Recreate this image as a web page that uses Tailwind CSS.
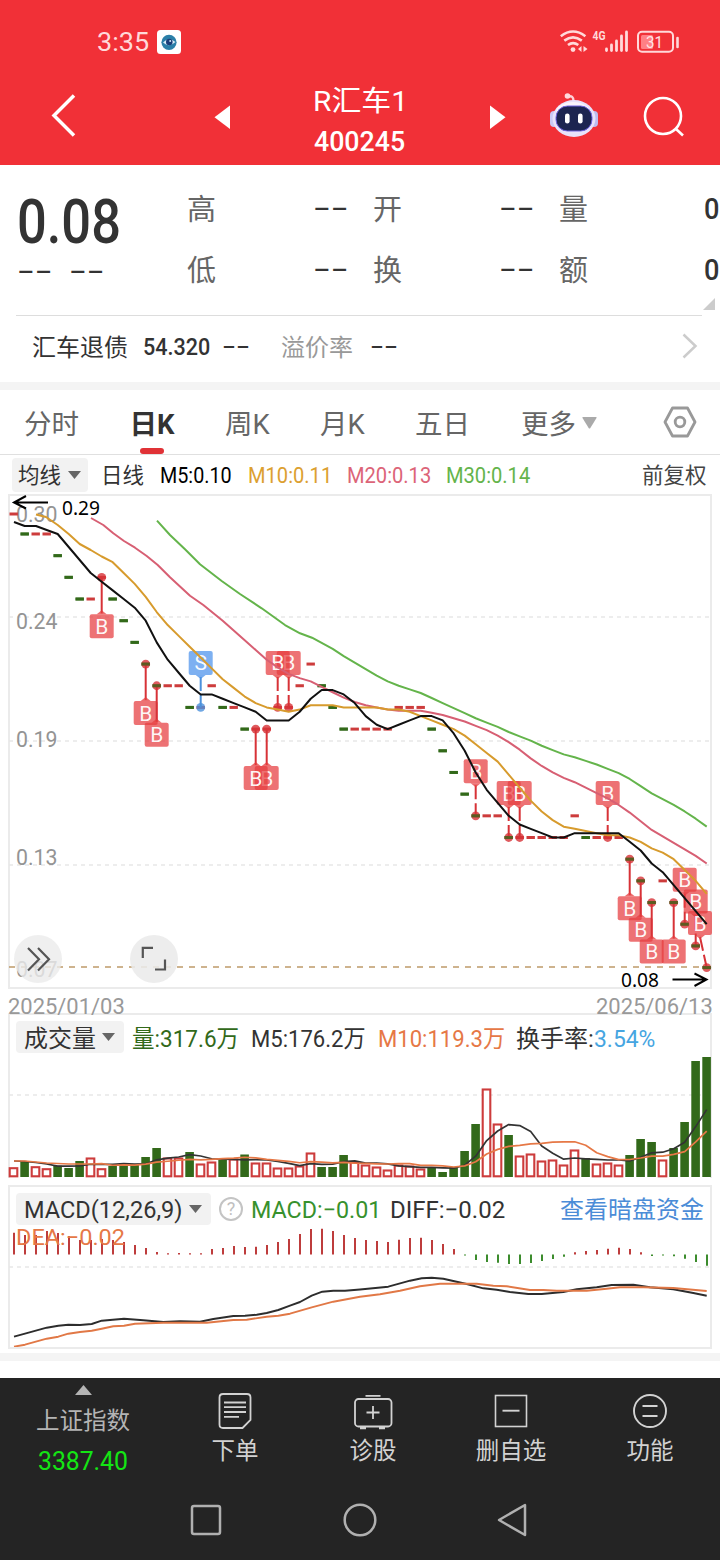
<!DOCTYPE html>
<html lang="zh-CN">
<head>
    <meta charset="UTF-8">
    <meta name="viewport" content="width=device-width, initial-scale=1.0">
    <title>R汇车1 400245</title>
    <script src="https://cdn.jsdelivr.net/npm/@tailwindcss/browser@4"></script>
</head>
<body class="bg-white">
<div class="w-[720px] h-[1560px] overflow-hidden bg-white font-['Roboto','Noto_Sans_CJK_SC',sans-serif] leading-none text-[#333] whitespace-nowrap">

    <!-- Header -->
    <header class="h-[165px] bg-[#f13037] text-white">
        <div class="flex items-center h-[84px] pl-[97px]">
            <span class="text-[26px] text-[#ffd9da]" data-fit="52">3:35</span>
            <svg class="ml-2 w-6 h-6" viewBox="0 0 24 24">
                <rect width="24" height="24" rx="3.5" fill="#fff"/>
                <circle cx="12" cy="12.3" r="7.6" fill="#2b7fa8"/>
                <path d="M6 12.5Q12 6.500 18.500 12Q12 18 6 12.500Z" fill="#d8ecf8"/>
                <circle cx="12.300" cy="12" r="3.300" fill="#1b3e78"/>
                <circle cx="13.200" cy="11" r="1" fill="#cfe6f5"/>
            </svg>
            <svg class="ml-[379px] w-[120px] h-6" viewBox="560 30 120 24" fill="none">
                <g stroke="#ffd9da" stroke-width="2.600">
                    <path d="M560.800 36.200Q573 26.800 585.400 36.200"/>
                    <path d="M564.300 40.600Q573 34 581.800 40.600"/>
                    <path d="M568 45Q573 41.200 578.300 45"/>
                </g>
                <circle cx="573" cy="49.600" r="2.400" fill="#ffd9da"/>
                <path d="M581.500 46v6l-3.500-3zM583.500 46v6l4-3z" fill="#ffd9da"/>
                <text x="592.500" y="39.500" font-size="12" font-weight="700" fill="#ffd9da" textLength="13" lengthAdjust="spacingAndGlyphs">4G</text>
                <g stroke="#ffd9da" stroke-width="2.800" stroke-linecap="round">
                    <path d="M606.500 49v1.500M611.500 45v5.500M616.500 41v9.500M621.500 36v14.500M626.500 32v18.500"/>
                </g>
                <rect x="638" y="31.800" width="35" height="20" rx="4" stroke="#ffd9da" stroke-width="2"/>
                <rect x="641" y="35" width="12" height="14" rx="1.500" fill="#ff8085"/>
                <text x="646" y="47.500" font-size="16" fill="#ffe2e3" textLength="17" lengthAdjust="spacingAndGlyphs">31</text>
                <path d="M677.500 38v9" stroke="#ffd9da" stroke-width="2.600" stroke-linecap="round"/>
            </svg>
        </div>
        <div class="flex items-start h-[81px] pl-[50px]">
            <svg class="mt-[10px] w-[26px] h-11" viewBox="0 0 26 44" fill="none" stroke="#fff" stroke-width="3.500"><path d="M24 1.500L4 21.500L24 41.500"/></svg>
            <svg class="mt-[21px] ml-[138px] w-4 h-6" viewBox="0 0 16 24"><path d="M16 0.500V24L0.500 12.300Z" fill="#fff"/></svg>
            <div class="ml-[70px] w-[120px] flex flex-col items-center font-medium">
                <div class="h-[34px] pt-px flex items-center"><span class="text-[28px] font-normal" data-fit="95">R汇车1</span></div>
                <div class="h-[48px] flex items-center"><span class="text-[27px]" data-fit="91">400245</span></div>
            </div>
            <svg class="mt-[21px] ml-[70px] w-4 h-6" viewBox="0 0 16 24"><path d="M0 0.500V24L15.500 12.300Z" fill="#fff"/></svg>
            <!-- assistant robot -->
            <svg class="mt-[8px] ml-[42px] w-[50px] h-[46px]" viewBox="548 92 50 46" fill="none">
                <path d="M568 96.500Q573.500 95 573.500 101" stroke="#ffd0d6" stroke-width="2.400"/>
                <circle cx="567.500" cy="96" r="2.800" fill="#ffd9dc"/>
                <rect x="550" y="111" width="8" height="16" rx="4" fill="#c9c8f5"/>
                <rect x="590" y="111" width="8" height="16" rx="4" fill="#bdbcf0"/>
                <ellipse cx="574" cy="118.500" rx="21.500" ry="18.500" fill="#e8e2fb"/>
                <ellipse cx="573" cy="112" rx="17" ry="10" fill="#fbf4fb"/>
                <rect x="556" y="106" width="36" height="25" rx="11.500" fill="#1d2550" stroke="#7064e0" stroke-width="1"/>
                <rect x="565" y="113.500" width="4.600" height="10" rx="2.300" fill="#fff"/>
                <rect x="578" y="113.500" width="4.600" height="10" rx="2.300" fill="#fff"/>
            </svg>
            <svg class="mt-[11px] ml-[44px] w-[44px] h-[44px]" viewBox="642 95 44 44" fill="none" stroke="#fff" stroke-width="2.600"><circle cx="663" cy="116" r="18"/><path d="M675.500 128.500L683 135.500"/></svg>
        </div>
    </header>

    <!-- Quote -->
    <section class="h-[150px] flex">
        <div class="w-[187px] pl-[17px]">
            <div class="mt-[26px] h-[62px] flex items-center font-medium text-[61px]"><span data-fit="104">0.08</span></div>
            <div class="h-[33px] flex items-center gap-[16px] text-[28px] font-['Liberation_Sans']"><span data-fit="36">--</span><span data-fit="36">--</span></div>
        </div>
        <div class="w-[186px] pt-[15px] text-[29px] text-[#666]">
            <div class="h-[61px] pr-[24px] flex items-center justify-between">高<span class="text-[#333] text-[28px] font-['Liberation_Sans'] relative -top-[4px]" data-fit="36">--</span></div>
            <div class="h-[61px] pr-[24px] flex items-center justify-between">低<span class="text-[#333] text-[28px] font-['Liberation_Sans'] relative -top-[4px]" data-fit="36">--</span></div>
        </div>
        <div class="w-[186px] pt-[15px] text-[29px] text-[#666]">
            <div class="h-[61px] pr-[24px] flex items-center justify-between">开<span class="text-[#333] text-[28px] font-['Liberation_Sans'] relative -top-[4px]" data-fit="36">--</span></div>
            <div class="h-[61px] pr-[24px] flex items-center justify-between">换<span class="text-[#333] text-[28px] font-['Liberation_Sans'] relative -top-[4px]" data-fit="36">--</span></div>
        </div>
        <div class="w-[161px] pt-[15px] text-[29px] text-[#666]">
            <div class="h-[61px] pr-[1px] flex items-center justify-between">量<span class="text-[#333] font-medium relative -top-px" data-fit="15">0</span></div>
            <div class="h-[61px] pr-[1px] flex items-center justify-between">额<span class="text-[#333] font-medium relative -top-px" data-fit="15">0</span></div>
            <svg class="-mt-[4px] ml-[144px] w-3 h-3" viewBox="0 0 12 12"><path d="M12 0V12H0Z" fill="#ccc"/></svg>
        </div>
    </section>
    <div class="ml-4 w-[686px] h-px bg-[#ddd]"></div>
    <section class="h-[66px] pb-[3px] pl-[32px] flex items-center text-[24px]">
        <span class="w-[111px]">汇车退债</span>
        <span class="w-[79px]"><span class="text-[23.5px] font-medium" data-fit="67">54.320</span></span>
        <span class="w-[59px] relative -top-[3px]"><span class="font-['Liberation_Sans']" data-fit="28">--</span></span>
        <span class="w-[89px] text-[#999]">溢价率</span>
        <span class="w-[312px] relative -top-[3px]"><span class="font-['Liberation_Sans']" data-fit="28">--</span></span>
        <svg class="-mt-[3px] w-[16px] h-[26px]" viewBox="0 0 16 26" fill="none" stroke="#ccc" stroke-width="2.500"><path d="M1.500 1.500L13.500 13L1.500 24.500"/></svg>
    </section>
    <div class="h-2 bg-[#f4f4f4]"></div>

    <!-- Period tabs -->
    <nav class="h-[65px] border-b border-[#e0e0e0] flex text-[27.5px] text-[#666] pl-[24px]">
        <div class="w-[83px] h-[66px] pt-[3px] flex items-center">分时</div>
        <div class="w-[90px] flex flex-col items-center font-bold text-[#333]">
            <div class="h-[66px] pt-[3px] -mb-[8px] flex items-center">日K</div>
            <div class="w-6 h-[6px] rounded-full bg-[#e03236]"></div>
        </div>
        <div class="w-[95px] h-[66px] pt-[3px] pl-[28px] flex items-center">周K</div>
        <div class="w-[95px] h-[66px] pt-[3px] pl-[28px] flex items-center">月K</div>
        <div class="w-[134px] h-[66px] pt-[3px] pl-[28px] flex items-center">五日</div>
        <div class="w-[142px] h-[66px] pt-[3px] flex items-center gap-[6px]">更多
            <svg class="-mt-1 w-[15px] h-3" viewBox="0 0 15 12"><path d="M1 0H14Q15 0 14.500 1L8.200 11.200Q7.500 12 6.800 11.200L0.500 1Q0 0 1 0Z" fill="#aaa"/></svg>
        </div>
        <svg class="mt-[15px] w-[34px] h-[34px]" viewBox="663 405 34 34" fill="none" stroke="#999" stroke-width="2.800" stroke-linejoin="round"><path d="M672.500 408H687.500L695 422L687.500 436H672.500L665 422Z"/><circle cx="680" cy="422" r="4.800"/></svg>
    </nav>

    <!-- Moving average legend -->
    <div class="h-[39px] pt-[2px] pl-3 flex items-center text-[21.5px]">
        <div class="-mt-[2px] pt-[2px] w-[76px] h-[34px] bg-[#f2f2f2] rounded pl-[6px] flex items-center gap-[7px]">均线<svg class="-mt-[2px] w-[13px] h-2" viewBox="0 0 13 8"><path d="M0 0H13L6.500 8Z" fill="#666"/></svg></div>
        <span class="w-[72px] pl-[13px]">日线</span>
        <span class="w-[88px] text-black text-[22.5px]"><span data-fit="72">M5:0.10</span></span>
        <span class="w-[99px] text-[#dca030] text-[22.5px]"><span data-fit="84">M10:0.11</span></span>
        <span class="w-[99px] text-[#dc6478] text-[22.5px]"><span data-fit="84">M20:0.13</span></span>
        <span class="w-[196px] text-[#64b44b] text-[22.5px]"><span data-fit="84">M30:0.14</span></span>
        <span class="text-[#444]">前复权</span>
    </div>

    <svg id="kline" class="block w-[720px] h-[495px]" viewBox="0 494 720 495" fill="none"></svg>

    <div class="h-[24px] pl-[8px] pr-[7px] flex items-center justify-between text-[22.5px] text-[#999] pt-[10px]">
        <span data-fit="117">2025/01/03</span>
        <span data-fit="117">2025/06/13</span>
    </div>

    <!-- Volume -->
    <section class="ml-[8px] w-[704px] h-[165px] border-2 border-b-0 border-[#ebebeb]">
        <div class="mt-[6px] pt-[3px] pl-[6px] h-8 flex items-center text-[24px]">
            <div class="-mt-[3px] pt-[3px] w-[108px] h-8 bg-[#f2f2f2] rounded pl-[8px] flex items-center gap-[6px]">成交量<svg class="-mt-1 w-[13px] h-2" viewBox="0 0 13 8"><path d="M0 0H13L6.500 8Z" fill="#666"/></svg></div>
            <span class="ml-[8px] w-[119px] text-[#32691a]"><span data-fit="107">量:317.6万</span></span>
            <span class="w-[127px]"><span data-fit="115">M5:176.2万</span></span>
            <span class="w-[138px] text-[#e67846]"><span data-fit="127">M10:119.3万</span></span>
            <span class="w-[78px]">换手率:</span>
            <span class="text-[#46a5e1]"><span data-fit="61">3.54%</span></span>
        </div>
        <svg id="volume" class="block -ml-[10px] w-[720px] h-[125px] relative" viewBox="0 1053 720 125" fill="none"></svg>
    </section>

    <!-- MACD -->
    <section class="mt-[7px] ml-[8px] w-[704px] h-[164px] border-2 border-[#ebebeb]">
        <div class="mt-[6px] mb-px pt-[2px] pl-[6px] h-8 flex items-center text-[24px]">
            <div class="-mt-[2px] pt-[2px] w-[195px] h-8 bg-[#f2f2f2] rounded pl-[8px] flex items-center gap-[6px]"><span data-fit="159">MACD(12,26,9)</span><svg class="-mt-[3px] w-[13px] h-2" viewBox="0 0 13 8"><path d="M0 0H13L6.500 8Z" fill="#666"/></svg></div>
            <div class="-mt-[2px] ml-[8px] w-6 h-6 rounded-full border-2 border-[#c4c4c4] text-[#c0c0c0] text-[18px] flex items-center justify-center">?</div>
            <span class="ml-[8px] w-[139px] text-[#37912d]"><span data-fit="130">MACD:−0.01</span></span>
            <span class="w-[170px]"><span data-fit="115">DIFF:−0.02</span></span>
            <span class="text-[#4b8cd7]">查看暗盘资金</span>
        </div>
        <svg id="macd" class="block -ml-[10px] w-[720px] h-[121px] relative" viewBox="0 1226 720 121" fill="none"></svg>
    </section>
    <div class="mt-[4px] h-2 bg-[#f4f4f4]"></div>

    <!-- Bottom bar -->
    <footer class="mt-[17px] h-[182px] bg-[#242424] text-[#d2d2d2] text-[23.5px]">
        <div class="h-[102px] flex">
            <div class="w-[166px] flex flex-col items-center text-[#b4b4b4]">
                <svg class="mt-[7px] w-[17px] h-[10px]" viewBox="0 0 17 10"><path d="M8.500 0L17 10H0Z" fill="#b4b4b4"/></svg>
                <div class="h-[52px] pt-[2px] flex items-center">上证指数</div>
                <div class="h-[29px] flex items-center text-[25px] text-[#14e614]"><span data-fit="90">3387.40</span></div>
            </div>
            <div class="w-[138px] flex flex-col items-center">
                <svg class="mt-[13px] w-10 h-10" viewBox="215 1391 40 40" fill="none" stroke="#d2d2d2" stroke-width="1.800"><path d="M223 1394H247Q250.500 1394 250.500 1397.500V1420L242.500 1428H223Q219.500 1428 219.500 1424.500V1397.500Q219.500 1394 223 1394ZM224 1402.500H246M224 1407.200H246M224 1412H246M224 1416.800H239"/></svg>
                <div class="h-[41px] pt-px flex items-center">下单</div>
            </div>
            <div class="w-[138px] flex flex-col items-center">
                <svg class="mt-[13px] w-10 h-10" viewBox="353 1391 40 40" fill="none" stroke="#d2d2d2" stroke-width="1.800"><rect x="355" y="1399" width="36.500" height="27.500" rx="3.500"/><path d="M365.500 1395.800H380.500M373 1406V1419M366.500 1412.500H379.500"/><path d="M360 1428H366M379 1428H385" stroke-width="2.400"/></svg>
                <div class="h-[41px] pt-px flex items-center">诊股</div>
            </div>
            <div class="w-[138px] flex flex-col items-center">
                <svg class="mt-[13px] w-10 h-10" viewBox="491 1391 40 40" fill="none" stroke="#d2d2d2" stroke-width="1.600"><rect x="495.500" y="1395.500" width="31" height="31"/><path d="M502.500 1410.700H519.500" stroke-width="1.900"/></svg>
                <div class="h-[41px] pt-px flex items-center">删自选</div>
            </div>
            <div class="w-[140px] flex flex-col items-center">
                <svg class="mt-[13px] w-10 h-10" viewBox="630 1391 40 40" fill="none" stroke="#d2d2d2" stroke-width="1.900"><circle cx="650" cy="1411" r="16"/><path d="M642.500 1406H657.500M642.500 1416H657.500"/></svg>
                <div class="h-[41px] pt-px flex items-center">功能</div>
            </div>
        </div>
        <div class="h-20 flex justify-center items-start pt-[20px] gap-[112px]">
            <svg class="w-10 h-10" viewBox="0 0 40 40" fill="none" stroke="#b0b0b0" stroke-width="2.500"><rect x="4" y="6" width="28" height="28" rx="2"/></svg>
            <svg class="w-10 h-10" viewBox="0 0 40 40" fill="none" stroke="#b0b0b0" stroke-width="2.500"><circle cx="20" cy="20" r="15.300"/></svg>
            <svg class="w-10 h-10" viewBox="0 0 40 40" fill="none" stroke="#b0b0b0" stroke-width="2.500" stroke-linejoin="round"><path d="M33 5V35L7 20Z"/></svg>
        </div>
    </footer>
</div>

<script>
    const RED = '#cd3c3c', GREEN = '#32691a', GRID = '#e8e8e8';
    const X = i => 13.7 + i * 11;

    // [colour, price level] for each trading day; one level is 0.01
    const DAYS = 'r0 g1 r1 r1 g2 g3 g4 r4 r3 g4 g5 g6 g7 g8 r8 r8 g9 r9 r8 g9 r9 g10 r10 r10 r9 r9 r8 r7 g8 g9 g10 r10 r10 r10 r10 r9 r9 r9 g10 g11 g12 g13 g14 r14 r14 g15 r15 r15 r15 r15 r15 r14 g15 r15 r15 r15 g16 g17 g18 r17 g18 g19 g20 g21'
        .split(' ').map(d => [d[0], Number(d.slice(1))]);
    const Y = n => n === 0 ? 514 : 512.3 + n * 21.68;

    function line(points, color, width = 2) {
        return `<polyline points="${points.map(p => p.join(',')).join(' ')}" stroke="${color}" stroke-width="${width}" stroke-linejoin="round"/>`;
    }

    function average(values, n) {
        const out = [];
        for (let i = n - 1; i < values.length; i++) {
            const sum = values.slice(i - n + 1, i + 1).reduce((a, b) => a + b, 0);
            out.push([X(i), sum / n]);
        }
        return out;
    }

    function label(x, y, text, width, size, color, extra = '') {
        return `<text x="${x}" y="${y}" font-size="${size}" fill="${color}" textLength="${width}" lengthAdjust="spacingAndGlyphs" ${extra}>${text}</text>`;
    }

    function axis(y, text) {
        return label(16, y, text, 41.5, 22.5, '#949494');
    }

    function dashed(y) {
        return `<path d="M9 ${y}H711" stroke="${GRID}" stroke-width="1.6" stroke-dasharray="4 4"/>`;
    }

    // trade marker: dot on the candle, stem and lettered box
    function marker(i, side, letter = 'B') {
        const x = X(i), y = Y(DAYS[i][1]);
        const bx = Math.min(x, 700), by = side === 'up' ? y - 44.5 : y + 49;
        const fill = letter === 'S' ? '#4b91eb' : '#e63c3e';
        const stem = letter === 'S' ? '#4b91dc' : '#d73237';
        let s = `<circle cx="${x}" cy="${y}" r="4.4" fill="${stem}" fill-opacity=".8"/>`;
        if (side === 'up') {
            s += `<path d="M${bx} ${by + 14}L${x} ${y}" stroke="${stem}" stroke-width="2" stroke-dasharray="14 4 20"/>`;
            s += `<path d="M${bx - 5} ${by + 12}L${bx} ${by + 16}L${bx + 5} ${by + 12}Z" fill="${fill}" fill-opacity=".75"/>`;
        } else {
            s += `<path d="M${x} ${y}V${by - 13}" stroke="${stem}" stroke-width="2"/>`;
            s += `<path d="M${bx - 5} ${by - 12}L${bx} ${by - 16}L${bx + 5} ${by - 12}Z" fill="${fill}" fill-opacity=".75"/>`;
        }
        s += `<rect x="${bx - 12}" y="${by - 12}" width="24" height="24" rx="2" fill="${fill}" fill-opacity=".72"/>`;
        s += `<text x="${bx}" y="${by + 7.5}" font-size="21" text-anchor="middle" fill="#fff" fill-opacity=".95">${letter}</text>`;
        return s;
    }

    function drawKline() {
        let s = '<rect x="9" y="495" width="702" height="493" stroke="#ebebeb" stroke-width="2"/>';
        s += dashed(617) + dashed(741) + dashed(865);
        s += '<path d="M9 967H706" stroke="#be9b69" stroke-width="1.7" stroke-dasharray="6 6"/>';
        s += axis(521.5, '0.30') + axis(629, '0.24') + axis(747, '0.19') + axis(865, '0.13') + axis(977, '0.07');

        DAYS.forEach(([c, n], i) => {
            s += `<rect x="${X(i) - 4.2}" y="${Y(n) - 1.5}" width="8.4" height="3" fill="${c === 'r' ? RED : GREEN}"/>`;
        });
        [8, 12, 13, 23, 22, 56, 57, 58, 60].forEach(i => s += marker(i, 'down'));
        [25, 24, 42, 45, 46, 54, 61, 62, 63].forEach(i => s += marker(i, 'up'));
        s += marker(17, 'up', 'S');
        DAYS.forEach(([c, n], i) => {
            if (c === 'g') s += `<rect x="${X(i) - 4.2}" y="${Y(n) - 1.5}" width="8.4" height="3" fill="${GREEN}" fill-opacity=".7"/>`;
        });

        const prices = DAYS.map(d => 512.3 + d[1] * 21.68);
        const m30 = [[157, 520.7], [170, 535], [185, 549.3], [200, 564.3], [221.7, 581], [240, 594], [261.7, 608.3], [285, 625], [300, 633.3], [312, 637.7]];
        const m20 = [[91, 518], [103.3, 525], [113.3, 533.3], [124, 541], [135, 547.7], [146.7, 556], [157.7, 565], [170, 577.3], [190, 595.7], [203.3, 605]];
        s += line(m30.concat(average(prices, 30)), '#64b44b');
        s += line(m20.concat(average(prices, 20)), '#d75f73');
        s += line([[36, 514.5], [46, 517], [57.7, 525], [68.700, 534], [79.7, 544], [90.7, 550], [101.7, 556.5]].concat(average(prices, 10)), '#d79b2d');
        s += line([[14, 522], [24.7, 526], [36, 526], [46.7, 530]].concat(average(prices, 5)), '#111');

        s += '<path d="M48 502.500H14M26 496L14 502.500L26 508.500" stroke="#000" stroke-width="2"/>';
        s += '<path d="M672.500 979.500H706M694.500 973.500L706.500 979.500L694.500 986" stroke="#000" stroke-width="2"/>';
        s += label(62, 514.5, '0.29', 38, 20, '#000', 'font-family="Noto Sans"') + label(621, 986.5, '0.08', 38, 20, '#000', 'font-family="Noto Sans"');

        s += '<circle cx="38" cy="959" r="24" fill="#ebebeb" fill-opacity=".8"/><circle cx="154" cy="959" r="24" fill="#ebebeb" fill-opacity=".88"/>';
        s += '<path d="M28 948L39 959.300L28 970.500M38 948L49 959.300L38 970.500M142.800 958V947.800H153M155 969.500H165V959.500" stroke="#555" stroke-width="2.200"/>';
        document.getElementById('kline').innerHTML = s;
    }

    function drawVolume() {
        const tops = [1167.7, 1162, 1166.7, 1168.7, 1165.7, 1168, 1161, 1158, 1168.7, 1166, 1164, 1164, 1157, 1148, 1158, 1158,
            1152, 1164, 1162, 1160, 1159, 1154.5, 1163, 1163, 1168, 1168, 1166, 1153, 1167, 1167, 1155, 1162,
            1165, 1167, 1170, 1165, 1166, 1169, 1167, 1172, 1167, 1151, 1124, 1089, 1124, 1135, 1156, 1154,
            1161, 1160, 1165, 1150, 1158, 1164, 1163, 1165, 1155, 1139, 1142, 1160, 1148, 1122, 1061, 1057];
        let s = dashed(1095);
        tops.forEach((y, i) => {
            const up = DAYS[i][0] === 'r';
            s += up
                ? `<rect x="${X(i) - 4}" y="${y + 0.5}" width="7.6" height="${1176.3 - y - 0.5}" stroke="${RED}" stroke-width="2.1" fill="#fff"/>`
                : `<rect x="${X(i) - 4.4}" y="${y}" width="8.6" height="${1177 - y}" fill="${GREEN}"/>`;
        });
        s += line([[14, 1161], [24.7, 1161.5], [35.7, 1162.5], [46.7, 1164]].concat(average(tops, 5)), '#333', 1.7);
        s += line([[14, 1161], [24.7, 1161], [35.7, 1162], [46.7, 1163], [57.7, 1163.5], [68.7, 1164], [90.7, 1164], [101.7, 1163.7]].concat(average(tops, 10)), '#e67846', 1.7);
        document.getElementById('volume').innerHTML = s;
    }

    function drawMacd() {
        const ends = [1232.7, 1235, 1235, 1231, 1233, 1236, 1240, 1240, 1239, 1240, 1242, 1245, 1248, 1252, 1253.3, 1253,
            1253.3, 1253.3, 1249, 1248, 1246, 1247, 1246.7, 1245, 1242, 1239, 1234, 1229, 1228.7, 1231, 1235, 1238,
            1240, 1241, 1242, 1239.7, 1238, 1237.7, 1240, 1244, 1249, 1255.5, 1260, 1262, 1262.7, 1264, 1264, 1263,
            1261, 1259, 1256.7, 1252.3, 1251, 1250, 1248.7, 1247.7, 1249, 1252.3, 1256, 1255.5, 1256.3, 1258.7, 1262, 1265.7];
        const base = 1254.5;
        let s = dashed(1267);
        ends.forEach((y, i) => {
            s += `<path d="M${X(i) + 0.3} ${base}V${y}" stroke="${y < base ? '#be3c3c' : '#3c8c2d'}" stroke-width="2"/>`;
        });
        s += label(16, 1245, 'DEA:−0.02', 109, 22.5, '#e67846');
        const diff = [[14, 1336.7], [25, 1333.7], [46.7, 1327.7], [58.3, 1325.7], [68.3, 1324.7], [80, 1325], [91.7, 1324], [101.7, 1320.7], [124, 1318.7],
            [143.3, 1320.3], [163.3, 1322], [180, 1321.3], [200, 1321.7], [213.3, 1319], [233.3, 1316], [245, 1315.7], [256.7, 1314.7], [266.7, 1313],
            [278.3, 1310], [290, 1305.7], [300, 1302], [311.7, 1295.7], [322.3, 1291.7], [333.3, 1290.7], [345, 1290.7], [360, 1289.5], [388.3, 1286.7],
            [410, 1280.7], [421.7, 1278.3], [431.7, 1277.7], [443.3, 1278.7], [453.3, 1281], [466.7, 1284], [483.3, 1288.3], [496.7, 1289.7], [510, 1292],
            [528.3, 1294], [541.7, 1294], [563.3, 1292], [576.7, 1289.3], [596.7, 1287.3], [611.7, 1285], [633.3, 1284.7], [650, 1287.3], [673.3, 1289.3],
            [693.3, 1293], [706.7, 1295.7]];
        const dea = [[14, 1346.7], [25, 1344.7], [46.7, 1338.7], [58.3, 1336.7], [68.3, 1333.7], [80, 1332], [91.7, 1330.7], [101.7, 1328.7], [113.3, 1326.3],
            [124, 1325.7], [135, 1323.7], [163.3, 1322.7], [206.7, 1322.7], [233.3, 1320], [246.7, 1319.7], [266.7, 1316.7], [278.3, 1315.7], [290, 1313.7],
            [311.7, 1307.3], [333.3, 1301.7], [360, 1296.7], [380, 1294.3], [400, 1290.7], [420, 1286.3], [440, 1283.7], [476.7, 1283.7], [493.3, 1285.7],
            [506.7, 1286.3], [530, 1290], [543.3, 1290], [556.7, 1290.7], [586.7, 1290.7], [606.7, 1288.7], [620, 1287.3], [643.3, 1287.3], [673.3, 1288], [706.7, 1291]];
        s += line(diff, '#2d2d2d', 1.9) + line(dea, '#e17846', 1.9);
        document.getElementById('macd').innerHTML = s;
    }

    // squeeze or stretch a label to its column width, again whenever its own width changes
    function fit(el) {
        const natural = el.offsetWidth;
        const target = Number(el.dataset.fit);
        if (!natural) return;
        el.style.transformOrigin = 'left center';
        el.style.transform = `scaleX(${target / natural})`;
        el.style.marginRight = `${target - natural}px`;
    }

    drawKline();
    drawVolume();
    drawMacd();

    const observer = new ResizeObserver(entries => entries.forEach(e => fit(e.target)));
    document.querySelectorAll('[data-fit]').forEach(el => {
        el.style.display = 'inline-block';
        fit(el);
        observer.observe(el);
    });
</script>
</body>
</html>
